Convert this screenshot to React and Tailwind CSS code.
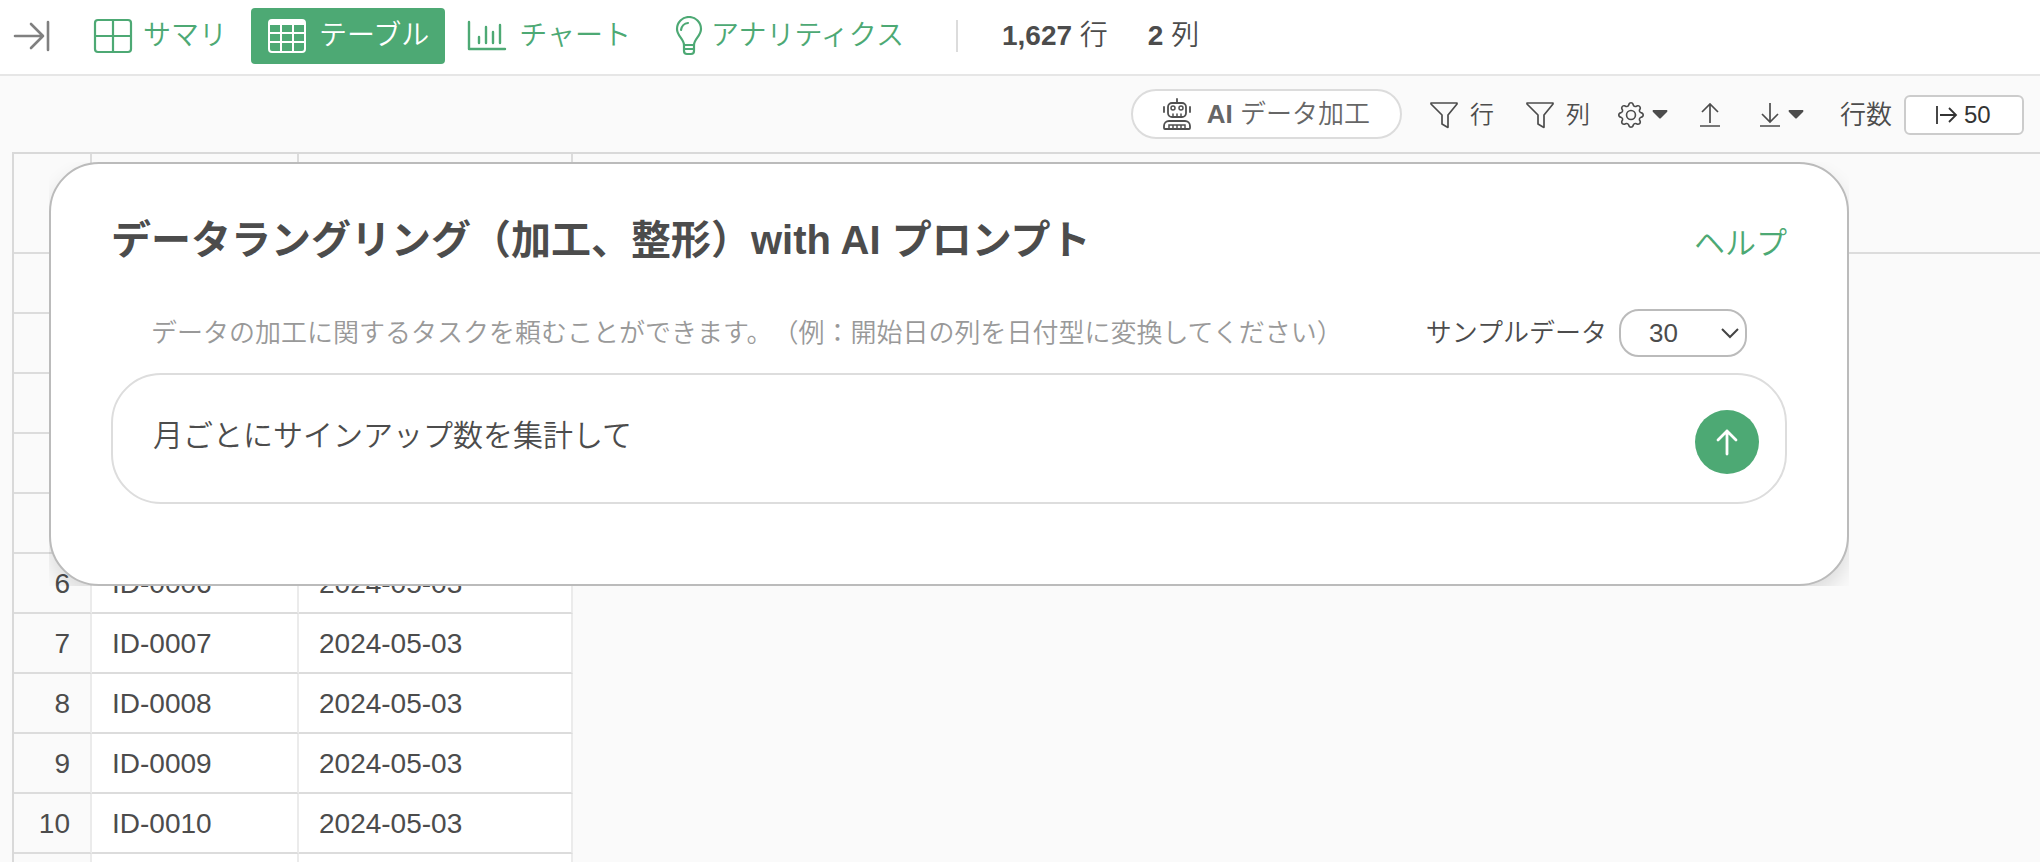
import clsx from "clsx";
import { BsGear } from "react-icons/bs";

const rows = [
  null,
  null,
  null,
  null,
  null,
  { n: 6, id: "ID-0006", date: "2024-05-03" },
  { n: 7, id: "ID-0007", date: "2024-05-03" },
  { n: 8, id: "ID-0008", date: "2024-05-03" },
  { n: 9, id: "ID-0009", date: "2024-05-03" },
  { n: 10, id: "ID-0010", date: "2024-05-03" },
  null,
];

function CollapseIcon() {
  return (
    <svg width="38" height="38" viewBox="0 0 38 38" fill="none" stroke="#808080" strokeWidth="2.6" strokeLinecap="round" strokeLinejoin="round">
      <path d="M2 19h28M18 7l12 12-12 12M35 5v28" />
    </svg>
  );
}

function SummaryIcon() {
  return (
    <svg width="40" height="36" viewBox="0 0 40 36" fill="none" stroke="currentColor" strokeWidth="2.2">
      <rect x="2" y="2" width="36" height="32" rx="3" />
      <path d="M20 2v32M2 18h36" />
    </svg>
  );
}

function GridIcon() {
  return (
    <svg width="40" height="36" viewBox="0 0 40 36" fill="none" stroke="currentColor" strokeWidth="2">
      <rect x="2" y="2" width="36" height="32" rx="3" />
      <path d="M2 5h36" strokeWidth="4" />
      <path d="M14 4v30M26 4v30M2 15h36M2 24h36" />
    </svg>
  );
}

function ChartIcon() {
  return (
    <svg width="40" height="36" viewBox="0 0 40 36" fill="none" stroke="currentColor" strokeWidth="2.4" strokeLinecap="round" strokeLinejoin="round">
      <path d="M2 4v27h36" />
      <path d="M12 19v6M19 9v16M26 14v11M33 7v18" />
    </svg>
  );
}

function BulbIcon() {
  return (
    <svg width="28" height="40" viewBox="0 0 28 40" fill="none" stroke="currentColor" strokeWidth="2.2" strokeLinecap="round" strokeLinejoin="round">
      <path d="M9 29c0-6-7-9-7-16a12 12 0 0 1 24 0c0 7-7 10-7 16z" />
      <path d="M6 14a8 8 0 0 1 7-7M9 29v6q0 3 3 3h4q3 0 3-3v-6M9 33h10" />
    </svg>
  );
}

function RobotIcon() {
  return (
    <svg width="28" height="32" viewBox="0 0 28 32" fill="none" stroke="#505050" strokeWidth="1.8" strokeLinecap="round">
      <path d="M14 1v4M1 9v5M27 9v5" />
      <rect x="5" y="5" width="18" height="14" rx="4" />
      <circle cx="10" cy="10" r="2" strokeWidth="1.5" />
      <circle cx="18" cy="10" r="2" strokeWidth="1.5" />
      <path d="M10 16v2M14 16v2M18 16v2" strokeWidth="1.5" />
      <path d="M1 30v-2a5 5 0 0 1 5-5h16a5 5 0 0 1 5 5v2q0 1-1 1H2q-1 0-1-1z" />
      <path d="M6 30v-3h16v3M10 27v3M14 27v3M18 27v3" strokeWidth="1.5" />
    </svg>
  );
}

function FunnelIcon() {
  return (
    <svg width="28" height="28" viewBox="0 0 28 28" fill="none" stroke="currentColor" strokeWidth="1.7" strokeLinejoin="round">
      <path d="M1 2h26v1l-9 11v12q0 1-1 0l-5-3v-9L1 3z" />
    </svg>
  );
}

function Caret() {
  return (
    <svg width="16" height="10" viewBox="0 0 16 10" fill="currentColor">
      <path d="M1 0h14q1 1 0 2L9 8q-1 1-2 0L1 2q-1-1 0-2z" />
    </svg>
  );
}

function TransferIcon({ down }) {
  return (
    <svg width="20" height="24" viewBox="0 0 20 24" fill="none" stroke="currentColor" strokeWidth="1.7">
      <path d={down ? "M10 0v19M2 11l8 8 8-8M0 23h20" : "M10 20V1M2 9l8-8 8 8M0 23h20"} />
    </svg>
  );
}

function Tab({ icon, label, active, className }) {
  return (
    <button
      type="button"
      className={clsx(
        "flex h-14 items-center rounded px-4 text-[28px] font-[350]",
        active ? "bg-[#4da974] text-white" : "text-[#4da974]",
        className,
      )}
    >
      {icon}
      {label}
    </button>
  );
}

function Header() {
  return (
    <header className="flex h-[76px] items-center border-b-2 border-[#e6e6e6] bg-white pb-0.5 pl-[13px]">
      <button type="button" aria-label="パネルを開く">
        <CollapseIcon />
      </button>
      <nav className="ml-[26px] flex items-center">
        <Tab icon={<SummaryIcon />} label="サマリ" className="gap-2.5" />
        <Tab icon={<GridIcon />} label="テーブル" active className="ml-2 gap-3" />
        <Tab icon={<ChartIcon />} label="チャート" className="ml-1.5 gap-3" />
        <Tab icon={<BulbIcon />} label="アナリティクス" className="ml-3 gap-2" />
      </nav>
      <div className="ml-9 h-8 w-[2px] bg-[#dcdcdc]" />
      <p className="ml-11 text-[28px] font-[350]">
        <b className="font-bold">1,627</b> 行
      </p>
      <p className="ml-10 text-[28px] font-[350]">
        <b className="font-bold">2</b> 列
      </p>
    </header>
  );
}

function Toolbar() {
  return (
    <div className="flex h-[76px] items-center justify-end pt-0.5 pr-4 text-[26px] font-[350]">
      <button
        type="button"
        className="mb-0.5 flex h-[50px] items-center gap-4 rounded-full border-2 border-[#dcdcdc] bg-white px-[30px] text-[#666]"
      >
        <RobotIcon />
        <span>
          <b className="font-bold">AI</b> データ加工
        </span>
      </button>
      <button type="button" className="ml-7 flex items-center gap-3 text-2xl">
        <FunnelIcon />行
      </button>
      <button type="button" className="ml-8 flex items-center gap-3 text-2xl">
        <FunnelIcon />列
      </button>
      <button type="button" aria-label="設定" className="ml-7 flex items-center gap-2">
        <BsGear size={26} />
        <Caret />
      </button>
      <button type="button" aria-label="アップロード" className="ml-8">
        <TransferIcon />
      </button>
      <button type="button" aria-label="ダウンロード" className="ml-10 flex items-center gap-2">
        <TransferIcon down />
        <Caret />
      </button>
      <label htmlFor="row-count" className="ml-9">
        行数
      </label>
      <div className="relative ml-3 text-[#333]">
        <input
          id="row-count"
          defaultValue="50"
          className="h-10 w-[120px] rounded-md border-2 border-[#ccc] bg-white pl-[58px] text-2xl font-normal"
        />
        <svg className="absolute top-[11px] left-8" width="22" height="18" viewBox="0 0 22 18" fill="none" stroke="currentColor" strokeWidth="1.8">
          <path d="M1 0v18M4 9h16M13 2l7 7-7 7" />
        </svg>
      </div>
    </div>
  );
}

function DataTable() {
  return (
    <div className="ml-3 border-t-2 border-l-2 border-[#d9d9d9]">
      <table className="w-full table-fixed border-separate border-spacing-0 text-[28px]">
        <colgroup>
          <col className="w-[78px]" />
          <col className="w-[207px]" />
          <col className="w-[274px]" />
          <col />
        </colgroup>
        <thead>
          <tr className="h-[100px]">
            <th className="border-r-2 border-b-2 border-[#dcdcdc]" />
            <th className="border-r-2 border-b-2 border-[#dcdcdc]" />
            <th className="border-r-2 border-b-2 border-[#dcdcdc]" />
            <th className="border-b-2 border-[#dcdcdc]" />
          </tr>
        </thead>
        <tbody>
          {rows.map((row, index) => (
            <tr key={index} className="h-[60px]">
              <td className="border-r-2 border-b-2 border-r-[#ebebeb] border-b-[#dcdcdc] pt-0.5 pr-5 text-right">
                {row?.n}
              </td>
              <td className="border-r-2 border-b-2 border-r-[#ebebeb] border-b-[#dcdcdc] bg-white pt-0.5 pl-5">
                {row?.id}
              </td>
              <td className="border-r-2 border-b-2 border-r-[#ebebeb] border-b-[#dcdcdc] bg-white pt-0.5 pl-5">
                {row?.date}
              </td>
              <td />
            </tr>
          ))}
        </tbody>
      </table>
    </div>
  );
}

function PromptDialog() {
  return (
    <div className="absolute inset-x-0 top-[162px] mr-6 ml-[49px] max-w-[1800px] overflow-hidden">
      <section
        role="dialog"
        aria-labelledby="prompt-title"
        className="rounded-[50px] border-2 border-[#bbb] bg-white px-[60px] pt-[46px] pb-20 shadow-[0_10px_20px_rgba(0,0,0,0.12)]"
      >
        <div className="flex h-[60px] items-baseline justify-between">
          <h2 id="prompt-title" className="text-[40px] font-bold">
            データラングリング（加工、整形）with AI プロンプト
          </h2>
          <a href="#" className="text-[31px] font-[350] text-[#4da974]">
            ヘルプ
          </a>
        </div>
        <div className="mt-9 flex h-[54px] items-center justify-between pr-10 pl-10 text-[26px] font-[350]">
          <p className="text-[#999] [text-spacing-trim:space-all]">
            データの加工に関するタスクを頼むことができます。（例：開始日の列を日付型に変換してください）
          </p>
          <div className="flex items-center gap-3">
            <label htmlFor="sample">サンプルデータ</label>
            <div className="relative">
              <select
                id="sample"
                defaultValue="30"
                className="h-12 w-32 appearance-none rounded-[20px] border-2 border-[#bbb] bg-white pl-7 text-[26px] font-normal"
              >
                <option>10</option>
                <option>30</option>
                <option>50</option>
              </select>
              <svg className="pointer-events-none absolute top-[18px] right-2" width="18" height="12" viewBox="0 0 18 12" fill="none" stroke="#444" strokeWidth="2">
                <path d="M1 2l8 8 8-8" />
              </svg>
            </div>
          </div>
        </div>
        <div className="mt-[13px] flex h-[131px] items-center rounded-[50px] border-2 border-[#ddd] pt-1.5 pr-[26px] pl-10">
          <input
            aria-label="プロンプト"
            defaultValue="月ごとにサインアップ数を集計して"
            className="mb-3 min-w-0 flex-1 text-[30px] font-[350] outline-none"
          />
          <button
            type="button"
            aria-label="送信"
            className="flex size-16 items-center justify-center rounded-full bg-[#4da974]"
          >
            <svg width="24" height="28" viewBox="0 0 24 28" fill="none" stroke="#fff" strokeWidth="2.8" strokeLinecap="round" strokeLinejoin="round">
              <path d="M12 26V3M3 12l9-9 9 9" />
            </svg>
          </button>
        </div>
      </section>
    </div>
  );
}

export default function App() {
  return (
    <div className="relative h-screen overflow-hidden bg-[#fafafa] font-['Liberation_Sans','Noto_Sans_CJK_JP',sans-serif] text-[#4c4c4c]">
      <Header />
      <Toolbar />
      <DataTable />
      <PromptDialog />
    </div>
  );
}
